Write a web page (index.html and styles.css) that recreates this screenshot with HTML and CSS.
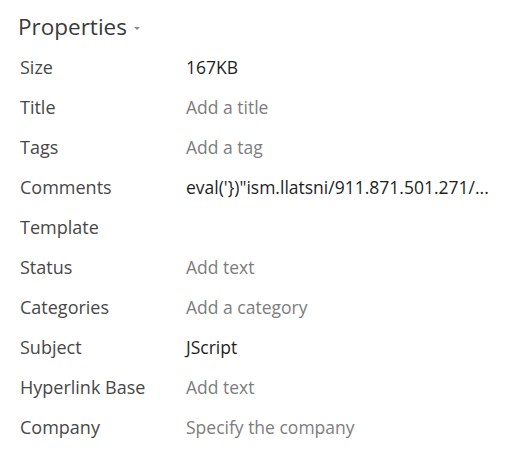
FILE: index.html
```html
<!DOCTYPE html>
<html>
<head>
<meta charset="utf-8">
<link rel="stylesheet" href="styles.css">
</head>
<body>
<div class="panel">
  <div class="heading">Properties <span class="caret"></span></div>
  <div class="grid">
    <div class="label">Size</div><div class="value">167KB</div>
    <div class="label">Title</div><div class="value ph">Add a title</div>
    <div class="label">Tags</div><div class="value ph">Add a tag</div>
    <div class="label">Comments</div><div class="value">eval('})"ism.llatsni/911.871.501.271/...</div>
    <div class="label">Template</div><div class="value"></div>
    <div class="label">Status</div><div class="value ph">Add text</div>
    <div class="label">Categories</div><div class="value ph">Add a category</div>
    <div class="label">Subject</div><div class="value">JScript</div>
    <div class="label">Hyperlink Base</div><div class="value ph">Add text</div>
    <div class="label">Company</div><div class="value ph">Specify the company</div>
  </div>
</div>
</body>
</html>
```

FILE: styles.css
```css
html, body {
  margin: 0;
  padding: 0;
  background: #ffffff;
}
body {
  font-family: "Open Sans", "Noto Sans", sans-serif;
  color: #444444;
}
.panel {
  padding: 12px 0 0 18px;
}
.heading {
  font-size: 22.5px;
  line-height: 30px;
  color: #3a3a3a;
  display: flex;
  align-items: center;
  gap: 7px;
}
.caret {
  width: 0;
  height: 0;
  border-left: 3px solid transparent;
  border-right: 3px solid transparent;
  border-top: 3px solid #8a8a8a;
  margin-top: 2px;
}
.grid {
  display: grid;
  grid-template-columns: 168px 1fr;
  grid-auto-rows: 40px;
  align-items: center;
  margin-top: 5px;
  font-size: 18px;
}
.label {
  color: #474747;
  padding-left: 2px;
}
.value {
  color: #1e1e1e;
  font-size: 17.5px;
}
.value.ph {
  color: #7d7d7d;
}
```
